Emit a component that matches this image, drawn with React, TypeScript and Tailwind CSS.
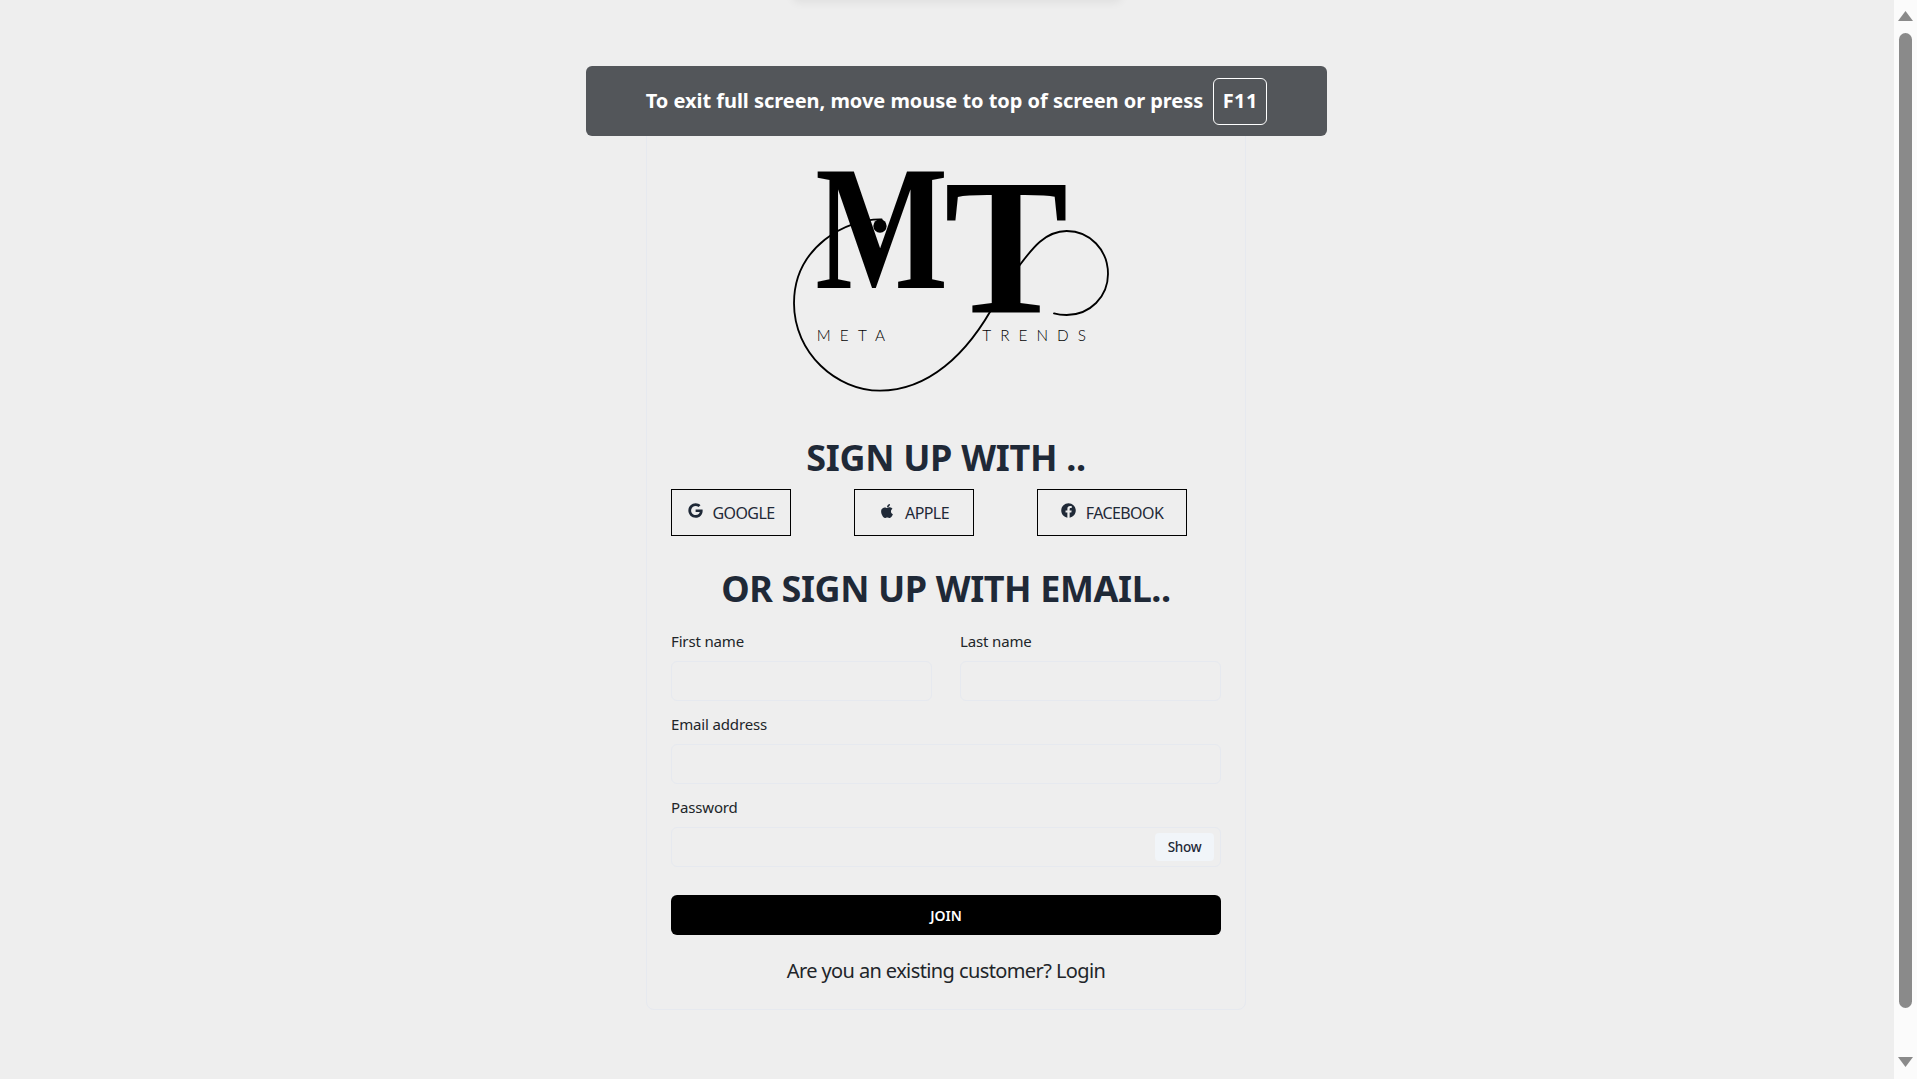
import { FaApple, FaFacebook, FaGoogle } from 'react-icons/fa';

const Logo = () => (
  <svg viewBox="0 0 1080 780" className="ml-[109px] block h-[260px] w-[360px]">
    <text x="106" y="413" fontSize="534" fontWeight="700" fontFamily="'Liberation Serif', serif" textLength="398" lengthAdjust="spacingAndGlyphs" fill="#000">M</text>
    <text x="493" y="490" fontSize="586" fontWeight="700" fontFamily="'Liberation Serif', serif" textLength="372" lengthAdjust="spacingAndGlyphs" fill="#000">T</text>
    <g fill="none" stroke="#000" strokeWidth="5.5" strokeLinecap="round">
      <path d="M305 208 C200 205 42 290 42 460 C42 610 170 722 300 722 C440 722 560 620 650 450" />
      <path d="M708 360 C750 305 790 243 860 243 C930 243 984 300 984 372 C984 440 930 495 860 495 C845 495 832 493 822 490" />
    </g>
    <circle cx="300" cy="228" r="20" fill="#000" />
    <text x="110" y="573" fontSize="46" fontFamily="Lato, sans-serif" fontWeight="300" textLength="205" lengthAdjust="spacing" fill="#000">META</text>
    <text x="607" y="573" fontSize="46" fontFamily="Lato, sans-serif" fontWeight="300" textLength="311" lengthAdjust="spacing" fill="#000">TRENDS</text>
  </svg>
);

const Field = ({ label, children }: { label: string; children?: React.ReactNode }) => (
  <div>
    <label className="mb-[10px] block text-[15px] leading-[20px] tracking-[-0.15px] text-[#212529]">{label}</label>
    <div className="relative h-10 rounded-md border border-[#e6e9ef]">{children}</div>
  </div>
);

const socialClass = 'flex h-[47px] items-center justify-center gap-[10px] border border-black text-[16px] tracking-[-0.6px] text-[#1f2937]';
const headingClass = 'text-center text-[36px] font-bold leading-[54px] text-[#1f2937]';

export default function App() {
  return (
    <div className="relative flex h-[1079px] overflow-hidden bg-[#eeeeee] font-['Noto_Sans',sans-serif]">
      <main className="flex-1 pt-[110px]">
        <div className="mx-auto w-[600px] -translate-x-px rounded-lg border border-[#e6e9ef] px-6 pb-[23px] pt-[39px]">
          <Logo />
          <h2 className={`mt-[21px] tracking-[-0.3px] ${headingClass}`}>SIGN UP WITH ..</h2>
          <div className="mt-1 flex justify-between pr-[34px]">
            <button className={`${socialClass} w-[120px]`}><FaGoogle className="size-[15px] -translate-y-[2px]" /> GOOGLE</button>
            <button className={`${socialClass} w-[120px]`}><FaApple className="size-[16px] -translate-y-[2px]" /> APPLE</button>
            <button className={`${socialClass} w-[150px]`}><FaFacebook className="size-[15px] -translate-y-[2px]" /> FACEBOOK</button>
          </div>
          <h2 className={`mt-[26px] tracking-[-0.4px] ${headingClass}`}>OR SIGN UP WITH EMAIL..</h2>
          <div className="mt-[15px] grid grid-cols-2 gap-x-7">
            <Field label="First name" />
            <Field label="Last name" />
          </div>
          <div className="mt-[13px]"><Field label="Email address" /></div>
          <div className="mt-[13px]">
            <Field label="Password">
              <button className="absolute right-1.5 top-[5px] h-7 w-[59px] rounded bg-[#f1f5f9] pt-px text-[13.5px] font-medium tracking-[-0.3px] text-[#1f2937]">Show</button>
            </Field>
          </div>
          <button className="mt-[28px] block h-10 w-full rounded-md bg-black text-[14px] font-semibold text-white">JOIN</button>
          <p className="mt-[21px] text-center text-[20px] leading-[30px] tracking-[-0.6px] text-[#212529]">Are you an existing customer? Login</p>
        </div>
      </main>
      <div className="flex w-[23px] flex-col items-center bg-[#fbfbfb] pt-[11px]">
        <svg viewBox="0 0 15 10" className="h-2.5 w-[15px] fill-[#8a8a8a]"><path d="M7.5 0 15 10H0z" /></svg>
        <div className="mt-3 h-[975px] w-[13px] rounded-full bg-[#8a8a8a]" />
        <svg viewBox="0 0 15 10" className="mt-[49px] h-2.5 w-[15px] fill-[#8a8a8a]"><path d="M0 0h15L7.5 10z" /></svg>
      </div>
      <div className="absolute left-[795px] top-[-8px] h-2 w-[324px] rounded-lg shadow-[0_0_8px_3px_rgba(0,0,0,0.06)]" />
      <div className="absolute left-[586px] top-[66px] flex h-[70px] w-[741px] items-center justify-center gap-[10px] rounded-md bg-[#505357]/[0.98] text-[20px] font-bold tracking-[-0.03px] text-white">
        <span>To exit full screen, move mouse to top of screen or press</span>
        <span className="flex h-[47px] w-[54px] items-center justify-center rounded-md border border-white tracking-[0.5px]">F11</span>
      </div>
    </div>
  );
}
